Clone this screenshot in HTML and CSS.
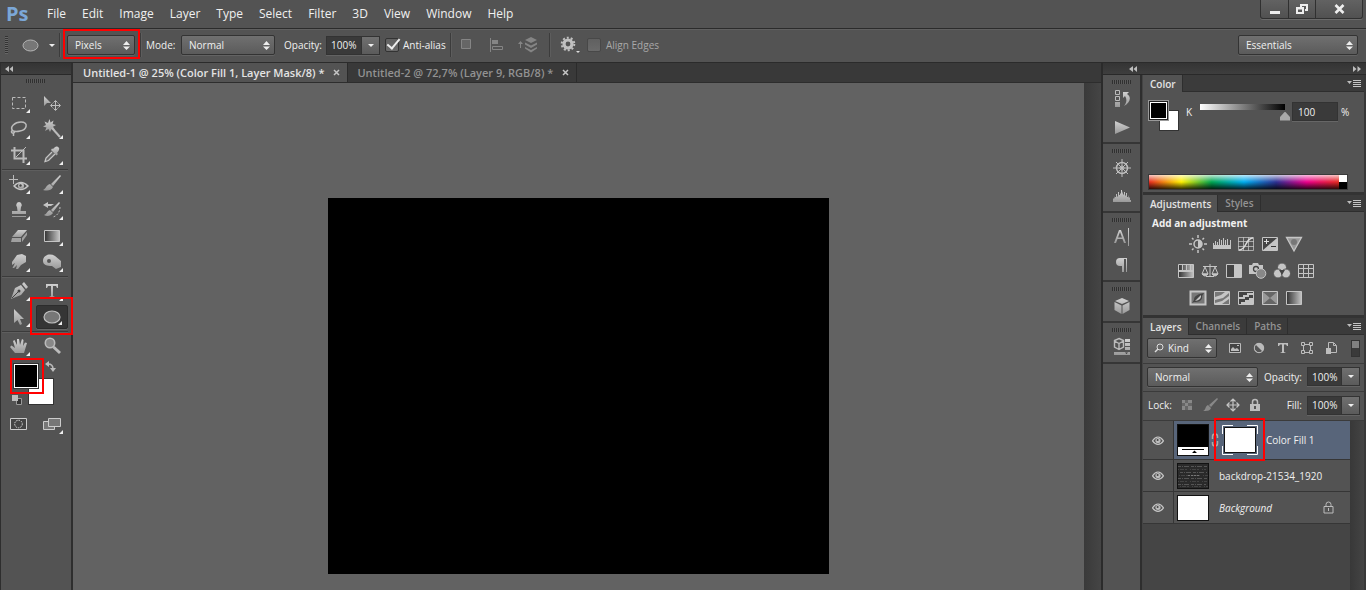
FILE: index.html
```
<!DOCTYPE html>
<html lang="en">
<head>
<meta charset="utf-8">
<title>Untitled-1 @ 25% (Color Fill 1, Layer Mask/8)</title>
<link rel="stylesheet" href="styles.css">
</head>
<body>
<svg class="defs" aria-hidden="true">
  <defs>
    <linearGradient id="metal" x1="0" y1="0" x2="0" y2="1"><stop offset="0" stop-color="#d0d0d0"/><stop offset="1" stop-color="#999"/></linearGradient>
    <linearGradient id="fade"><stop offset="0" stop-color="#333"/><stop offset="1" stop-color="#c4c4c4"/></linearGradient>
    <symbol id="updown" viewBox="0 0 7 9"><path d="M0 4L3.500 0L7 4zM0 5.500H7L3.500 9z"/></symbol>
    <symbol id="down" viewBox="0 0 6 3"><path d="M0 0H6L3 3z"/></symbol>
    <symbol id="collapse" viewBox="0 0 8 6"><path d="M4 0V6L0 3zM8 0V6L4.500 3z"/></symbol>
    <symbol id="expand" viewBox="0 0 8 6"><path d="M0 0V6L3.500 3zM4.500 0V6L8 3z"/></symbol>
    <symbol id="panelmenu" viewBox="0 0 14 9"><path d="M0 2H5L2.500 5z"/><path d="M6 1.500H14M6 3.500H14M6 5.500H14M6 7.500H14" stroke="currentColor"/></symbol>
    <symbol id="eye" viewBox="0 0 12 9"><path d="M.5 4.800Q3 1 6 1t5.500 3.800Q9 8.300 6 8.300T.5 4.800z" fill="none" stroke="currentColor" stroke-width="1.200"/><circle cx="6" cy="4.500" r="2.600"/><circle cx="5.600" cy="4" r="1" fill="#444"/></symbol>
    <symbol id="cross" viewBox="0 0 7 7"><path d="M1 1L6 6M6 1L1 6" stroke="currentColor" stroke-width="1.500"/></symbol>
  </defs>
</svg>

<header class="menubar">
  <span class="logo">Ps</span>
  <nav class="menus">
    <button>File</button><button>Edit</button><button>Image</button><button>Layer</button><button>Type</button><button>Select</button><button>Filter</button><button>3D</button><button>View</button><button>Window</button><button>Help</button>
  </nav>
  <div class="winctl">
    <button aria-label="Minimize"><svg width="12" height="12"><path d="M1 8H11V11H1z"/></svg></button>
    <button aria-label="Restore"><svg width="12" height="12"><path d="M4 1H12V8H9V6H10V3H6V4H4zM0 4H8V11H0zM2 6.500V9H6V6.500z" fill-rule="evenodd"/></svg></button>
    <button class="wide" aria-label="Close"><svg width="11" height="10"><path d="M1.500 1L9.500 9M9.500 1L1.500 9" stroke="currentColor" stroke-width="2.600"/></svg></button>
  </div>
</header>

<section class="options" aria-label="Tool options">
  <span class="vgrip"></span>
  <button class="toolpick" aria-label="Ellipse tool"><svg width="17" height="13"><ellipse cx="8.500" cy="6.500" rx="7.500" ry="5.500" fill="#777" stroke="#b5b5b5"/></svg><svg class="dn" width="6" height="3"><use href="#down"/></svg></button>
  <span class="vsep"></span>
  <div class="pick mode-pick marked"><select aria-label="Tool mode"><option>Pixels</option></select><svg width="7" height="9"><use href="#updown"/></svg></div>
  <span class="vsep"></span>
  <label class="w-mode" for="mode">Mode:</label>
  <div class="pick blend-pick"><select id="mode"><option>Normal</option></select><svg width="7" height="9"><use href="#updown"/></svg></div>
  <label class="w-opacity" for="op">Opacity:</label>
  <div class="spin"><input id="op" value="100%"><button aria-label="Opacity slider"><svg width="6" height="3"><use href="#down"/></svg></button></div>
  <label class="tick w-alias"><input type="checkbox" checked>Anti-alias</label>
  <span class="vsep"></span>
  <div class="pathops">
    <button aria-label="Path operations"><svg width="18" height="18"><path d="M3.500 3.500H12.500V12.500H3.500z" fill="#666" stroke="#858585"/></svg></button>
    <button aria-label="Path alignment"><svg width="18" height="18" fill="none"><path d="M2 2H3V16H2zM4 4H10V8H4z" fill="#858585"/><path d="M4.500 10.500H14.500V13.500H4.500z" fill="none" stroke="#858585"/></svg></button>
    <button aria-label="Path arrangement"><svg width="20" height="18"><g fill="#858585"><path d="M13 1L19 4L13 7L7 4z"/><path d="M7 6.500L13 9.500L19 6.500V8.500L13 12L7 8.500zM7 11L13 14L19 11V12.500L13 16.500L7 12.500z"/><path d="M2.500 5L0 8H2V12H3V8H5z"/></g></svg></button>
  </div>
  <span class="vsep"></span>
  <button class="gear" aria-label="Geometry options"><svg width="20" height="18"><circle cx="8" cy="8" r="4" fill="none" stroke="#c0c0c0" stroke-width="3.200"/><circle cx="8" cy="8" r="6.300" fill="none" stroke="#c0c0c0" stroke-width="2" stroke-dasharray="2 1.958"/><path d="M16 15H20L18 17z" fill="#ddd"/></svg></button>
  <label class="tick off"><input type="checkbox" disabled>Align Edges</label>
  <div class="pick workspace"><select aria-label="Workspace"><option>Essentials</option></select><svg width="7" height="9"><use href="#updown"/></svg></div>
</section>

<main class="work">
  <aside class="tools">
    <div class="strip"><button aria-label="Collapse tools"><svg width="8" height="6"><use href="#collapse"/></svg></button></div>
    <span class="grip"></span>
    <div class="toolset">
      <button aria-label="Marquee" class="more"><svg width="20" height="20"><path d="M3.500 4.500H16.500V15.500H3.500z" fill="none" stroke="#bbb" stroke-dasharray="3 2"/></svg></button>
      <button aria-label="Move"><svg width="20" height="20"><path d="M2 3V13L5 10H9z"/><path d="M9 12.500H18M13.500 8V17M11.500 9.500L13.500 7.500L15.500 9.500M11.500 15.500L13.500 17.500L15.500 15.500M10.500 10.500L8.500 12.500L10.500 14.500M16.500 10.500L18.500 12.500L16.500 14.500" fill="none" stroke="#bbb"/></svg></button>
      <button aria-label="Lasso" class="more"><svg width="20" height="20"><path d="M4 12C0 8 6 3 12 3C20 3 18 11 11 12C7 13 4 12 3 11.500C1 14 5 15 5.500 13M4.500 14V17" fill="none" stroke="#bbb" stroke-width="1.500"/></svg></button>
      <button aria-label="Magic wand" class="more"><svg width="20" height="20"><path d="M7.500 0L8.500 3.500L11.500 1.500L10.700 5L14 6L11 7.800L13 11L9.500 10L8 13L6.500 10L3 12L4.500 8.500L1 7.500L4 6L2.500 2.500L6 4z"/><path d="M10 9L18 18" stroke="#bbb" stroke-width="2"/></svg></button>
      <button aria-label="Crop" class="more"><svg width="20" height="20"><path d="M5.500 2V13.500H18M2 5.500H14.500V18" fill="none" stroke="#bbb" stroke-width="2"/><path d="M7 12L17 2" stroke="#bbb"/></svg></button>
      <button aria-label="Eyedropper" class="more"><svg width="20" height="20"><path d="M11 4C13 2 14 1 16 2C18 3 17.500 5 15 8L16 9L14.500 10.500L9 5L10 3.500z"/><path d="M10 7L4 13L3 16.500L6.500 15.500L13 9" fill="#666" stroke="#c5c5c5" stroke-width="1.300"/></svg></button>
    </div>
    <div class="toolset">
      <button aria-label="Healing" class="more"><svg width="20" height="20"><path d="M4.500 1V10M0 5.500H9" stroke="#bbb"/><path d="M5 12Q12 5 19 12Q12 19 5 12z" fill="none" stroke="#c5c5c5" stroke-width="1.400"/><circle cx="12" cy="12" r="3"/><circle cx="11.500" cy="11.500" r="1.200" fill="#444"/></svg></button>
      <button aria-label="Brush" class="more"><svg width="20" height="20"><path d="M18 1L19 2L11 12L9 10zM8 10L11 13C9 17 5 17 1 16C4 15 4 11 8 10z"/></svg></button>
      <button aria-label="Clone stamp" class="more"><svg width="20" height="20"><path d="M10 2A3 3 0 0 1 12 7L11.500 11H17V14H3V11H8.500L8 7A3 3 0 0 1 10 2zM3 16H17V17H3z"/></svg></button>
      <button aria-label="History brush" class="more"><svg width="20" height="20"><path d="M17 2L18 3L11 12L9 10zM8 10L11 13C9 16 5 17 2 15C5 14 5 11 8 10zM1 5L6 2V4H12L9 6H6V8z"/><path d="M18 7C18 12 15 16 11 17" fill="none" stroke="#bbb" stroke-dasharray="2 1.500"/></svg></button>
      <button aria-label="Eraser" class="more"><svg width="20" height="20"><path d="M9 4H18L12 11H3z"/><path d="M3 12H12V16H2zM13 12L18 6V9L13 16z" fill="#a0a0a0"/></svg></button>
      <button aria-label="Gradient" class="more"><svg width="20" height="20"><path d="M2.500 4.500H17.500V15.500H2.500z" fill="url(#fade)" stroke="#c5c5c5"/></svg></button>
      <button aria-label="Smudge" class="more"><svg width="20" height="20"><path d="M3 10L8 3L13 2L17 4V10L12 13L9 17H7L8 13L5 16H3.500L6 11L3 13z"/></svg></button>
      <button aria-label="Sponge" class="more"><svg width="20" height="20"><path d="M1 9C1 3 8 1 13 4L19 9V15L14 17L10 14C5 14 1 13 1 9z"/><circle cx="7" cy="9" r="2" fill="#555"/></svg></button>
    </div>
    <div class="toolset shapes">
      <button aria-label="Pen" class="more"><svg width="20" height="20"><path d="M2 18L6 7L12 4L16 9L12 14zM13 3L15 1L19 6L17 8z"/><path d="M3 17L9 11" stroke="#444"/><circle cx="10" cy="10" r="1.500" fill="#444"/></svg></button>
      <button aria-label="Type" class="more"><svg width="20" height="20"><path d="M4 3H16V7H15L14 5H11V15L13 16V17H7V16L9 15V5H6L5 7H4z"/></svg></button>
      <button aria-label="Path selection" class="more"><svg width="20" height="20"><path d="M5 2V16L8.500 13L11 18L13 17L11 12H15z"/></svg></button>
      <button aria-label="Ellipse" class="more current marked"><svg width="20" height="20"><ellipse cx="10" cy="10" rx="8" ry="6" fill="#777" stroke="#c0c0c0" stroke-width="1.200"/></svg></button>
    </div>
    <div class="toolset view">
      <button aria-label="Hand" class="more"><svg width="20" height="20"><path d="M6 17L1 11L2.500 9.500L6 12L4 5L5.500 4L8 9V3H10L11 9L13 3L14.500 4L14 10L16 6.500L18 7L15 17z"/></svg></button>
      <button aria-label="Zoom"><svg width="20" height="20"><circle cx="8" cy="7" r="4.700" fill="#888" stroke="#bbb" stroke-width="1.600"/><path d="M11.500 11L18 17" stroke="#bbb" stroke-width="3"/></svg></button>
    </div>
    <div class="swatches">
      <button class="bg" aria-label="Background color"></button>
      <button class="fg" aria-label="Foreground color"></button>
      <span class="mark"></span>
      <button class="swap" aria-label="Swap colors"><svg width="11" height="11"><path d="M3 3Q8 3 8 8" fill="none" stroke="#bbb" stroke-width="1.500"/><path d="M4 0V6L0 3zM5 7H11L8 11z"/></svg></button>
      <button class="reset" aria-label="Default colors"><svg width="10" height="10"><path d="M4.500 3.500H9.500V9.500H4.500z" fill="#333" stroke="#999"/><path d="M0 0H6V6H0z"/></svg></button>
    </div>
    <div class="toolset modes">
      <button aria-label="Quick mask"><svg width="20" height="20"><path d="M1.500 4.500H17.500V15.500H1.500z" fill="#444" stroke="#ccc"/><circle cx="9.500" cy="10" r="3.800" fill="none" stroke="#ddd" stroke-dasharray="1.500 1"/></svg></button>
      <button aria-label="Screen mode" class="more"><svg width="20" height="20"><path d="M1.500 7.500H12.500V15.500H1.500z" fill="#777" stroke="#ccc"/><path d="M6.500 4.500H18.500V12.500H6.500z" fill="#777" stroke="#ccc"/></svg></button>
    </div>
  </aside>

  <section class="document">
    <div class="doctabs">
      <div class="doctab on"><button>Untitled-1 @ 25% (Color Fill 1, Layer Mask/8) *</button><button aria-label="Close Untitled-1"><svg width="7" height="7"><use href="#cross"/></svg></button></div>
      <div class="doctab"><button>Untitled-2 @ 72,7% (Layer 9, RGB/8) *</button><button aria-label="Close Untitled-2"><svg width="7" height="7"><use href="#cross"/></svg></button></div>
    </div>
    <div class="viewport">
      <div class="stage"><div class="artboard"></div></div>
      <div class="scroll"></div>
    </div>
  </section>

  <aside class="dock">
    <div class="strip"><button class="dock-open" aria-label="Expand icons"><svg width="8" height="6"><use href="#collapse"/></svg></button><button aria-label="Collapse panels"><svg width="8" height="6"><use href="#expand"/></svg></button></div>
    <div class="dockcols">
      <div class="iconcol">
        <div class="icongroup"><span class="grip"></span>
          <button aria-label="History"><svg width="18" height="20"><path d="M2.500 1.500H6.500V5.500H2.500zM2.500 7.500H6.500V11.500H2.500z" fill="none" stroke="#bbb"/><path d="M2 13H7V18H2zM10 3H16L14 5C19 8 17 14 11 17C14 13 14 10 12 7L10 9z"/></svg></button>
          <button aria-label="Actions"><svg width="18" height="20"><path d="M2 4L17 10.500L2 17z"/></svg></button></div>
        <div class="icongroup"><span class="grip"></span>
          <button aria-label="Navigator"><svg width="18" height="20" class="line"><circle cx="9" cy="10" r="5.500" stroke-width="1.500"/><circle cx="9" cy="10" r="2"/><path d="M9 1V19M0 10H18M3 4L15 16M15 4L3 16"/></svg></button>
          <button aria-label="Histogram"><svg width="20" height="20"><path d="M1 16V13L2 12V13L3 10V11L4 11V8H5V11L6 10V6H7V9L8 9V7L9 8V4H10V8L11 5V8L12 9V6H13V9L14 10V7H15V11L16 11V9L17 12L18 11V14L19 14V16z"/></svg></button></div>
        <div class="icongroup"><span class="grip"></span>
          <button aria-label="Character"><svg width="18" height="20"><path d="M6 3H8L13 16H11L9.500 12H4.500L3 16H1zM5 10.500H9L7 5z" fill-rule="evenodd"/><path d="M15 1H16V19H15z"/></svg></button>
          <button aria-label="Paragraph"><svg width="18" height="20"><path d="M7 3H14V17H13V4H11V17H9V11H7A4 4 0 0 1 7 3z"/></svg></button></div>
        <div class="icongroup"><span class="grip"></span>
          <button aria-label="3D"><svg width="18" height="20"><path d="M9 2L16 5L9 8L2 5zM1.500 6L8.500 9.500V18L1.500 14zM16.500 6L9.500 9.500V18L16.500 14z"/></svg></button></div>
        <div class="icongroup"><span class="grip"></span>
          <button aria-label="Properties"><svg width="18" height="20"><path d="M6 1.500L10.500 3.500V10L6 12.500L1.500 10V3.500zM1.500 4L6 6.500L10.500 4M6 6.500V12" fill="none" stroke="#bbb" stroke-width="1.400"/><path d="M12 2H17V5H12zM12 6H17V9H12zM12 10H17V13H12zM1 15H17V18H1z"/><path d="M12 15.500H15L13.500 17z" fill="#333"/></svg></button></div>
      </div>
      <div class="panels">
        <section class="panel">
          <div class="tabs"><button class="on">Color</button><button class="pm" aria-label="Panel menu"><svg width="14" height="9"><use href="#panelmenu"/></svg></button></div>
          <div class="color">
            <div class="colorrow">
              <div class="pair"><button class="bg" aria-label="Background"></button><button class="fg" aria-label="Foreground"></button></div>
              <label for="k">K</label>
              <input class="range" type="range" aria-label="K amount" value="100">
              <input class="num" id="k" value="100"><span>%</span>
            </div>
            <div class="spectrum"><span class="hues"></span><span class="bw"></span></div>
          </div>
        </section>
        <section class="panel">
          <div class="tabs"><button class="on">Adjustments</button><button>Styles</button><button class="pm" aria-label="Panel menu"><svg width="14" height="9"><use href="#panelmenu"/></svg></button></div>
          <div class="adjust">
            <h2>Add an adjustment</h2>
            <div class="adjrow">
              <button aria-label="Brightness"><svg width="18" height="18"><circle cx="9" cy="9" r="4" fill="#555" stroke="#c5c5c5" stroke-width="1.500"/><path d="M9 5A4 4 0 0 1 9 13z"/><path d="M9 0V3M9 15V18M0 9H3M15 9H18M3 3L4.500 4.500M13.500 13.500L15 15M15 3L13.500 4.500M3 15L4.500 13.500" stroke="#c5c5c5" stroke-width="1.500"/></svg></button>
              <button aria-label="Levels"><svg width="18" height="18"><path d="M0 10H18V14H0z"/><path d="M.5 8V11M2.500 6V11M4.500 7V11M6.500 4V11M8.500 5V11M10.500 3V11M12.500 5V11M14.500 4V11M17.500 5V11" stroke="#c5c5c5"/></svg></button>
              <button aria-label="Curves"><svg width="18" height="18" class="line"><path d="M1.500 2.500H16.500V15.500H1.500zM6.500 2V16M11.500 2V16M1 6.500H17M1 11.500H17" opacity=".75"/><path d="M2 15C10 15 8 3 16 3" stroke="#ddd" stroke-width="1.500"/></svg></button>
              <button aria-label="Exposure"><svg width="18" height="18"><path d="M1.500 2.500H16.500V15.500H1.500z" fill="#444" stroke="#c5c5c5"/><path d="M16 3V15H2z"/><path d="M3 6.500H8M5.500 4V9" stroke="#ddd"/><path d="M10 11.500H15" stroke="#333"/></svg></button>
              <button aria-label="Vibrance"><svg width="18" height="18"><path d="M1.500 2.500H16.500L9 16z" fill="#999" stroke="#c5c5c5" stroke-width="1.300"/><circle cx="9" cy="7" r="3" fill="#777"/></svg></button>
            </div>
            <div class="adjrow">
              <button aria-label="Hue"><svg width="18" height="18"><path d="M1.500 2.500H16.500V15.500H1.500z" fill="url(#fade)" stroke="#c5c5c5"/><path d="M2 8H16V10H2zM5 3H6V8H5zM9 3H10V8H9zM13 3H14V8H13z"/></svg></button>
              <button aria-label="Color balance"><svg width="18" height="18" class="line"><path d="M2 4.500H16M9 2V14M5 14.500H13M4 5L1 12H7zM14 5L11 12H17z"/><path d="M1 12Q4 16 7 12zM11 12Q14 16 17 12z" fill="#c5c5c5"/></svg></button>
              <button aria-label="Black and white"><svg width="18" height="18"><path d="M1.500 2.500H16.500V15.500H1.500z" fill="#444" stroke="#c5c5c5"/><path d="M9 3H16V15H9z"/></svg></button>
              <button aria-label="Photo filter"><svg width="18" height="18"><path d="M0 3H3L4 1H9L10 3H14V12H0z"/><circle cx="7" cy="7" r="2.500" fill="none" stroke="#444" stroke-width="1.300"/><circle cx="12" cy="11.500" r="4.800" fill="#888" stroke="#c5c5c5"/></svg></button>
              <button aria-label="Channel mixer"><svg width="18" height="18"><g stroke="#555"><circle cx="9" cy="5.500" r="4.500"/><circle cx="5" cy="11.500" r="4.500"/><circle cx="13" cy="11.500" r="4.500"/></g><path d="M6 8H12L9 13z" fill="#444"/></svg></button>
              <button aria-label="Color lookup"><svg width="18" height="18" class="line"><path d="M1.500 2.500H16.500V15.500H1.500zM6.500 2V16M11.500 2V16M1 6.500H17M1 11.500H17"/></svg></button>
            </div>
            <div class="adjrow">
              <button aria-label="Invert"><svg width="18" height="18"><path d="M1.500 2.500H16.500V15.500H1.500z" fill="#777" stroke="#c5c5c5" stroke-width="2"/><path d="M3 14L5 11C5 7 9 5 15 4L13 7C14 12 9 13 5 13z" fill="#444"/><path d="M6 12L12 6Q13 11 6 12z"/></svg></button>
              <button aria-label="Posterize"><svg width="18" height="18"><path d="M1.500 2.500H16.500V15.500H1.500z" fill="#777" stroke="#c5c5c5"/><path d="M2 8L8 6L12 3H16V4L10 9L2 11zM2 14L9 12L16 7V10L9 15H2z"/></svg></button>
              <button aria-label="Threshold"><svg width="18" height="18"><path d="M1.500 2.500H16.500V15.500H1.500z" fill="#444" stroke="#c5c5c5"/><path d="M2 8H6V6H10V4H16V6H12V8H8V10H2zM4 15V13H8V11H12V9H16V15z"/></svg></button>
              <button aria-label="Selective color"><svg width="18" height="18"><path d="M1.500 2.500H16.500V15.500H1.500z" fill="#999" stroke="#c5c5c5"/><path d="M2 3L9 9L16 3zM2 15L9 9L16 15z" fill="#666"/></svg></button>
              <button aria-label="Gradient map"><svg width="18" height="18"><path d="M1.500 2.500H16.500V15.500H1.500z" fill="url(#fade)" stroke="#c5c5c5"/></svg></button>
            </div>
          </div>
        </section>
        <section class="panel grow">
          <div class="tabs"><button class="on">Layers</button><button>Channels</button><button>Paths</button><button class="pm" aria-label="Panel menu"><svg width="14" height="9"><use href="#panelmenu"/></svg></button></div>
          <div class="lrow filter">
            <div class="pick kind"><svg class="lens" width="10" height="10"><circle cx="6" cy="4" r="3" fill="none" stroke="#ddd"/><path d="M4 6L1 9" stroke="#ddd" stroke-width="1.500"/></svg><select aria-label="Filter"><option>Kind</option></select><svg width="7" height="9"><use href="#updown"/></svg></div>
            <div class="filters">
              <button aria-label="Pixel layers"><svg width="14" height="14"><path d="M1.500 2.500H12.500V11.500H1.500z" fill="#444" stroke="#bbb"/><path d="M3 10V8L5 6L7 8L9 7L11 9V10z"/><path d="M9 4H11V5H9z"/></svg></button>
              <button aria-label="Adjustment layers"><svg width="14" height="14"><circle cx="7" cy="7" r="5" fill="#bbb"/><path d="M3.500 3.500A5 5 0 0 0 10.500 10.500z" fill="#555"/><circle cx="7" cy="7" r="4.700" fill="none" stroke="#bbb"/></svg></button>
              <button aria-label="Type layers"><svg width="14" height="14"><path d="M2 2H12V5H11L10 3.500H8V11L10 12H4L6 11V3.500H4L3 5H2z"/></svg></button>
              <button aria-label="Shape layers"><svg width="14" height="14" class="line"><path d="M3 3.500H11M3 11.500H11M3.500 3V11M10.500 3V11"/><path d="M1.500 1.500H4.500V4.500H1.500zM9.500 1.500H12.500V4.500H9.500zM1.500 9.500H4.500V12.500H1.500zM9.500 9.500H12.500V12.500H9.500z" fill="#555"/></svg></button>
              <button aria-label="Smart objects"><svg width="14" height="14"><path d="M4.500 7V1.500H9.500L12.500 4.500V11.500H7M9.500 2V4.500H12" fill="none" stroke="#bbb"/><path d="M2 7H7V13H2z"/></svg></button>
            </div>
            <button class="toggle" aria-label="Filtering on"></button>
          </div>
          <div class="lrow">
            <div class="pick lblend"><select aria-label="Blend mode"><option>Normal</option></select><svg width="7" height="9"><use href="#updown"/></svg></div>
            <label class="end" for="lop">Opacity:</label>
            <div class="spin"><input id="lop" value="100%"><button aria-label="Opacity slider"><svg width="6" height="3"><use href="#down"/></svg></button></div>
          </div>
          <div class="lrow last">
            <span class="lock">Lock:</span>
            <div class="locks">
              <button aria-label="Lock transparency"><svg width="14" height="14"><path d="M2 2H12V12H2z" fill="#666"/><path d="M2 2H5V5H2zM8 2H12V5H8zM5 5H8V8H5zM2 8H5V12H2zM8 8H12V12H8z" fill="#888"/></svg></button>
              <button aria-label="Lock pixels"><svg width="16" height="14"><path d="M15 0L16 1L9 9L7 7zM6 7L9 10C8 13 5 13 1 13C4 12 3 8 6 7z" fill="#888"/></svg></button>
              <button aria-label="Lock position"><svg width="14" height="14"><path d="M1 7H13M7 1V13M4.500 3.500L7 1L9.500 3.500M4.500 10.500L7 13L9.500 10.500M3.500 4.500L1 7L3.500 9.500M10.500 4.500L13 7L10.500 9.500" fill="none" stroke="#c5c5c5" stroke-width="1.200"/></svg></button>
              <button aria-label="Lock all"><svg width="14" height="14"><path d="M4.500 6V4A2.500 2.500 0 0 1 9.500 4V6" fill="none" stroke="#bbb" stroke-width="1.500"/><path d="M2 6H12V13H2zM6 8V11H8V8z" fill-rule="evenodd"/></svg></button>
            </div>
            <label class="end" for="fill">Fill:</label>
            <div class="spin"><input id="fill" value="100%"><button aria-label="Fill slider"><svg width="6" height="3"><use href="#down"/></svg></button></div>
          </div>
          <div class="layerbox">
            <ul class="layers">
              <li class="layer tall on">
                <button class="eye" aria-label="Hide layer"><svg width="12" height="9"><use href="#eye"/></svg></button>
                <div class="ldata">
                  <span class="thumb fillthumb"><svg width="30" height="8"><path d="M0 0H30V8H0z" fill="#fff"/><path d="M4 2H26V3H4zM14 6L16.500 3.500L19 6z" fill="#000"/></svg></span>
                  <svg class="link" width="8" height="14"><path d="M1.500 6V3.500Q1.500 1 4 1T6.500 3.500V5M1.500 9V10.500Q1.500 13 4 13T6.500 10.500V8M4 5V9" fill="none" stroke="#aaa" stroke-width="1.500"/></svg>
                  <span class="mask"><svg width="36" height="30"><path d="M.5 9V.5H11M25 .5H35.500V9M35.500 21V29.500H25M11 29.500H.5V21" fill="none" stroke="#fff"/><path d="M2.500 2.500H33.500V27.500H2.500z" fill="#fff" stroke="#111"/></svg></span>
                  <span>Color Fill 1</span>
                </div>
              </li>
              <li class="layer">
                <button class="eye" aria-label="Hide layer"><svg width="12" height="9"><use href="#eye"/></svg></button>
                <div class="ldata"><span class="thumb"><svg width="30" height="24"><path d="M0 0H30V24H0z" fill="#2a2a2a"/><path d="M0 2.500H30M2 8.500H29M0 14.500H30M0 20.500H28" stroke="#555" stroke-dasharray="3 1 1 1 5 2"/><path d="M0 5.500H28M1 11.500H30M0 17.500H29M2 22.500H30" stroke="#444" stroke-dasharray="1 1 4 1 2 3"/><path d="M10 11.500H22" stroke="#777" stroke-dasharray="2 1"/></svg></span><span class="name">backdrop-21534_1920</span></div>
              </li>
              <li class="layer">
                <button class="eye" aria-label="Hide layer"><svg width="12" height="9"><use href="#eye"/></svg></button>
                <div class="ldata"><span class="thumb white"></span><em class="name">Background</em><svg class="padlock" width="11" height="13"><path d="M3 5.500V3.500A2.500 2.500 0 0 1 8 3.500V5.500M1 5.500H10V12H1z" fill="none" stroke="#bbb"/><path d="M5 7H6V10H5z"/></svg></div>
              </li>
            </ul>
            <div class="lscroll"></div>
          </div>
        </section>
      </div>
    </div>
  </aside>
</main>
</body>
</html>
```
FILE: styles.css
```
* { box-sizing: border-box; }
body {
  margin: 0;
  min-height: 100vh;
  display: flex;
  flex-direction: column;
  background: #535353;
  color: #f0f0f0;
  font: 10px/14px "Open Sans", "Noto Sans", sans-serif;
  overflow: hidden;
}
button, input, select { font: inherit; color: inherit; margin: 0; padding: 0; border: 0; background: none; border-radius: 0; }
button { display: flex; align-items: center; justify-content: center; }
label, span, em, h2, button { white-space: nowrap; }
svg { display: block; flex: none; fill: #bdbdbd; color: #c5c5c5; }
svg.line { fill: none; stroke: #bdbdbd; }
.defs { position: absolute; width: 0; height: 0; }

.menubar { display: flex; align-items: center; height: 29px; border-bottom: 1px solid #2b2b2b; }
.logo { width: 33px; margin-left: 6px; font: bold 20px/24px "Open Sans", sans-serif; color: #7ba7d7; }
.menus { display: flex; font-size: 12px; line-height: 18px; }
.menus button { padding: 0 8px; }
.winctl { display: flex; align-self: flex-start; margin-left: auto; margin-right: 3px; height: 19px; border: 1px solid #303030; border-top: 0; border-radius: 0 0 3px 3px; box-shadow: 0 1px 0 #6b6b6b; background: linear-gradient(#626262, #515151); }
.winctl button { width: 27px; }
.winctl button + button { border-left: 1px solid #303030; }
.winctl .wide { width: 47px; }
.winctl svg { fill: #eee; color: #eee; }

.options { display: flex; align-items: center; height: 34px; padding: 0 8px 2px 5px; border-top: 1px solid #606060; border-bottom: 1px solid #2b2b2b; }
.vgrip { width: 3px; height: 18px; background: repeating-linear-gradient(#333 0 1px, #666 1px 2px); }
.toolpick { width: 51px; gap: 10px; padding-left: 9px; }
.toolpick svg.dn { fill: #eee; }
.vsep { width: 1px; height: 24px; background: #3c3c3c; box-shadow: 1px 0 0 #5d5d5d; }
.pick { position: relative; height: 20px; border: 1px solid #333; border-radius: 2px; background: linear-gradient(#707070, #5b5b5b); box-shadow: 0 1px 0 #636363; display: flex; align-items: center; }
.pick select { appearance: none; flex: 1; min-width: 0; height: 18px; padding: 0 16px 0 7px; outline: 0; }
.pick > svg:last-child { position: absolute; right: 4px; top: 5px; fill: #eee; pointer-events: none; }
.mode-pick { width: 68px; margin: 0 5px 0 7px; }
.marked::after { content: ""; position: absolute; border: 2px solid #f00; pointer-events: none; }
.mode-pick::after { inset: -7px -6px -5px -5px; }
.w-mode { width: 35px; margin-left: 5px; }
.blend-pick { width: 94px; }
.w-opacity { width: 42px; margin-left: 9px; }
.spin { display: flex; height: 19px; border: 1px solid #333; background: #3a3a3a; box-shadow: 0 1px 0 #636363; }
.spin input { width: 34px; padding-left: 4px; outline: 0; }
.spin button { width: 18px; border-left: 1px solid #333; background: linear-gradient(#707070, #5b5b5b); }
.spin svg { fill: #eee; }
.tick { display: flex; align-items: center; gap: 4px; margin-left: 5px; }
.tick input { appearance: none; width: 14px; height: 14px; border: 1px solid #333; border-radius: 2px; background: linear-gradient(#606060, #6a6a6a); position: relative; }
.tick input:checked::after { content: ""; position: absolute; left: 4px; top: -3px; width: 5px; height: 11px; border: solid #eee; border-width: 0 2px 2px 0; transform: rotate(40deg); }
.tick.off { color: #a8a8a8; }
.tick.off input { border-color: #484848; margin-right: 1px; }
.w-alias { width: 65px; }
.pathops { display: flex; width: 98px; padding-left: 7px; gap: 12px; }
.gear { width: 37px; padding-left: 2px; }
.gear + .tick { margin-left: 0; }
.workspace { width: 120px; margin-left: auto; }

.work { flex: 1; display: flex; min-height: 0; }
.strip { display: flex; align-items: center; justify-content: space-between; height: 12px; padding: 0 5px; background: linear-gradient(#343434, #3e3e3e); border-bottom: 1px solid #292929; }
.grip { display: block; width: 19px; height: 4px; background: repeating-linear-gradient(90deg, #303030 0 1px, #5a5a5a 1px 2px); }
.tools { width: 73px; border: solid #2e2e2e; border-width: 0 2px 0 1px; flex: none; }
.tools .grip { margin: 4px auto 0 25px; }
.tools .strip { padding-left: 4px; }
.toolset { display: grid; grid-template-columns: 33px 33px; grid-auto-rows: 26px; margin: 0 3px 0 1px; padding: 1px 0; border-bottom: 1px solid #3b3b3b; box-shadow: 0 1px 0 #5e5e5e; }
.grip + .toolset { padding-top: 7px; }
.toolset button { position: relative; }
.toolset svg:not(.line), .icongroup svg:not(.line) { fill: url(#metal); }
.more::before { content: ""; position: absolute; right: 5px; bottom: 3px; border: 2px solid transparent; border-right-color: #eee; border-bottom-color: #eee; }
.toolset .current { background: #353535; border: 1px solid #2c2c2c; border-radius: 2px; box-shadow: 0 1px 0 #666; margin: 1px 0 1px 1px; }
.current::after { inset: -9px -6px -7px -7px; }
.toolset.view { border: 0; box-shadow: none; }
.swatches { position: relative; height: 50px; }
.swatches button, .pair button { position: absolute; padding: 0; }
.fg { left: 12px; top: 3px; width: 26px; height: 26px; background: #000; border: 1px solid #333; box-shadow: inset 0 0 0 1px #fff; }
.bg { left: 27px; top: 18px; width: 26px; height: 27px; background: #fff; border: 1px solid #333; }
.swatches .fg { background: #000; }
.swatches .bg { background: #fff; }
.mark { position: absolute; left: 9px; top: -2px; width: 34px; height: 36px; border: 2px solid #f00; }
.swatches .swap { left: 44px; top: 1px; }
.swatches .reset { left: 11px; top: 35px; }
.toolset.modes { border: 0; box-shadow: none; }

.document { flex: 1; min-width: 0; display: flex; flex-direction: column; }
.doctabs { display: flex; height: 20px; background: #393939; border-bottom: 1px solid #2d2d2d; font-size: 11px; font-weight: 600; }
.doctab { display: flex; gap: 9px; padding: 0 7px 0 9px; border-right: 1px solid #2b2b2b; color: #929292; }
.doctab.on { background: #535353; color: #e4e4e4; padding-left: 10px; }
.viewport { flex: 1; display: flex; }
.stage { flex: 1; display: flex; justify-content: center; align-items: flex-start; padding-top: 115px; background: #626262; }
.artboard { width: 501px; height: 376px; background: #000; }
.scroll { width: 17px; background: linear-gradient(90deg, #3a3a3a, #454545); }

.dock { width: 265px; flex: none; display: flex; flex-direction: column; border-left: 2px solid #2b2b2b; }
.dock-open { margin-left: 21px; }
.dockcols { flex: 1; display: flex; min-height: 0; }
.iconcol { width: 39px; border-right: 2px solid #2e2e2e; flex: none; }
.icongroup { padding: 5px 0 1px; border-bottom: 2px solid #363636; display: grid; justify-items: center; }
.icongroup .grip { margin-bottom: 1px; }
.icongroup button { height: 28px; width: 36px; }
.panels { flex: 1; min-width: 0; display: flex; flex-direction: column; border-left: 1px solid #444; border-right: 2px solid #383838; }
.panel { border-bottom: 3px solid #333; }
.panel.grow { flex: 1; border-bottom: 0; display: flex; flex-direction: column; }
.tabs { display: flex; height: 17px; background: #3b3b3b; font-weight: 600; color: #939393; flex: none; }
.tabs button { padding: 0 6px 0 7px; border-right: 1px solid #2e2e2e; border-bottom: 1px solid #2e2e2e; }
.tabs .on { background: #535353; color: #e4e4e4; border-bottom: 0; }
.tabs .pm { flex: 1; justify-content: flex-end; border-right: 0; padding: 0 3px; }
.color { height: 100px; padding: 9px 5px 0; display: flex; flex-direction: column; }
.colorrow { display: flex; align-items: flex-start; height: 73px; flex: none; }
.colorrow label { width: 14px; padding-top: 4px; margin-left: 7px; }
.colorrow > span { padding-top: 4px; margin-left: 3px; }
.pair { position: relative; width: 31px; height: 31px; }
.pair .fg { left: 0; top: -1px; width: 21px; height: 21px; background: #000; border: 1px solid #999; box-shadow: inset 0 0 0 1px #222, inset 0 0 0 2px #fff; }
.pair .bg { left: 11px; top: 9px; width: 20px; height: 21px; background: #fff; }
.range { appearance: none; width: 90px; height: 18px; margin: 2px 2px 0 0; background: linear-gradient(90deg, #fff, #000) 0 1px / 85px 6px no-repeat; }
.range::-webkit-slider-thumb { appearance: none; width: 10px; height: 9px; margin-top: 8px; background: #aaa; clip-path: polygon(50% 0, 100% 60%, 100% 100%, 0 100%, 0 60%); }
.num { width: 46px; height: 19px; margin-top: 1px; padding-left: 5px; background: #3a3a3a; border: 1px solid #333; box-shadow: 0 1px 0 #666; }
.spectrum { display: flex; flex: none; width: 200px; height: 16px; border: 1px solid #3a3a3a; }
.hues { flex: 1; background: linear-gradient(#fffb, #fff0 50%, #000c), linear-gradient(90deg, #e62b20, #fff000 17%, #00a550 33%, #00adef 50%, #2e3192 67%, #ec008c 83%, #e62b20); }
.bw { width: 8px; background: linear-gradient(#fff 50%, #000 50%); }
.adjust { height: 103px; padding: 4px 15px 0 0; }
.adjust h2 { margin: 0 0 0 9px; font-size: 10px; line-height: 14px; font-weight: bold; }
.adjrow { display: flex; justify-content: center; gap: 6px; height: 27px; }
.adjust svg { fill: #c5c5c5; }
.adjust svg.line { fill: none; stroke: #c5c5c5; }
.lrow { display: flex; align-items: center; height: 28px; padding: 0 4px 2px; border-bottom: 1px solid #3b3b3b; flex: none; }
.lrow.filter, .lrow.last { height: 29px; }
.kind { width: 70px; }
.kind .lens { margin-left: 6px; }
.kind select { padding-left: 4px; }
.filters { display: flex; gap: 10px; margin-left: 11px; }
.toggle { width: 9px; height: 17px; margin-left: auto; border: 1px solid #333; background: linear-gradient(#808080 50%, #3a3a3a 50%); }
.lblend { width: 111px; }
.end { margin-left: auto; margin-right: 5px; }
.lrow .spin input { width: 33px; }
.lock { width: 33px; padding-left: 1px; }
.locks { display: flex; gap: 8px; }
.layerbox { flex: 1; display: flex; background: #454545; min-height: 0; }
.layers { list-style: none; margin: 0; padding: 0; flex: 1; }
.layer { display: flex; height: 32px; border-bottom: 1px solid #363636; background: #535353; }
.layer.tall { height: 39px; }
.eye { width: 31px; border-right: 1px solid #363636; }
.ldata { flex: 1; display: flex; align-items: center; padding-left: 3px; }
.layer.on .ldata { background: #58657a; }
.thumb { width: 32px; height: 26px; border: 1px solid #111; background: #000; }
.thumb.white { background: #fff; }
.fillthumb { height: 32px; display: flex; align-items: flex-end; }
.link { margin: 0 1px 0 2px; }
.mask { position: relative; margin: 0 8px 0 2px; }
.mask::after { content: ""; position: absolute; inset: -7px -7px -6px -8px; border: 2px solid #f00; z-index: 1; }
.name { margin-left: 10px; }
.padlock { margin: 0 16px 0 auto; }
.lscroll { width: 14px; background: linear-gradient(90deg, #383838, #444); }
```
